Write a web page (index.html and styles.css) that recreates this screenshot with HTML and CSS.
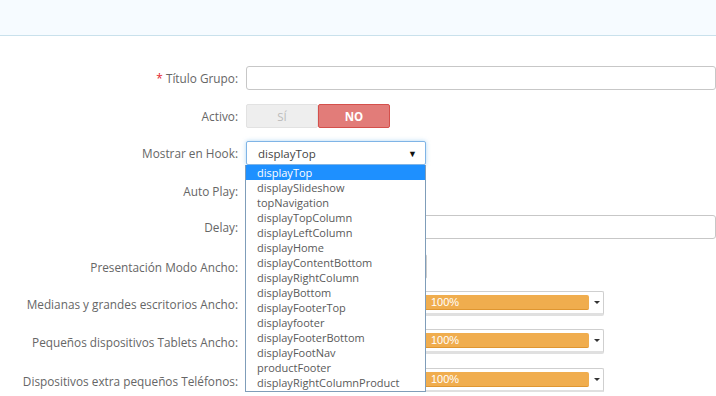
FILE: index.html
```html
<!DOCTYPE html>
<html lang="es">
<head>
    <meta charset="UTF-8">
    <meta name="viewport" content="width=device-width, initial-scale=1.0">
    <title>Grupo</title>
    <link rel="stylesheet" href="styles.css">
</head>
<body>

    <div class="toolbar"></div>

    <form class="form">
        <div class="row">
            <label class="label"><span class="required">*</span> Título Grupo:</label>
            <input type="text" class="text-input">
        </div>

        <div class="row">
            <label class="label">Activo:</label>
            <div class="switch">
                <span class="switch-yes">SÍ</span>
                <span class="switch-no">NO</span>
            </div>
        </div>

        <div class="row row-tight">
            <label class="label">Mostrar en Hook:</label>
            <div class="hook-select">
                <div class="hook-value">displayTop <span class="hook-arrow">&#9660;</span></div>
                <ul class="hook-list">
                    <li class="selected">displayTop</li>
                    <li>displaySlideshow</li>
                    <li>topNavigation</li>
                    <li>displayTopColumn</li>
                    <li>displayLeftColumn</li>
                    <li>displayHome</li>
                    <li>displayContentBottom</li>
                    <li>displayRightColumn</li>
                    <li>displayBottom</li>
                    <li>displayFooterTop</li>
                    <li>displayfooter</li>
                    <li>displayFooterBottom</li>
                    <li>displayFootNav</li>
                    <li>productFooter</li>
                    <li>displayRightColumnProduct</li>
                </ul>
            </div>
        </div>

        <div class="row">
            <label class="label">Auto Play:</label>
            <div class="switch"></div>
        </div>

        <div class="row row-tighter">
            <label class="label">Delay:</label>
            <input type="text" class="text-input">
        </div>

        <div class="row row-loose">
            <label class="label">Presentación Modo Ancho:</label>
            <div class="plain-select"></div>
        </div>

        <div class="row row-tight">
            <label class="label">Medianas y grandes escritorios Ancho:</label>
            <div class="width-select">
                <div class="width-bar">100%</div>
                <span class="width-caret"></span>
            </div>
        </div>

        <div class="row">
            <label class="label">Pequeños dispositivos Tablets Ancho:</label>
            <div class="width-select">
                <div class="width-bar">100%</div>
                <span class="width-caret"></span>
            </div>
        </div>

        <div class="row row-loose">
            <label class="label">Dispositivos extra pequeños Teléfonos:</label>
            <div class="width-select">
                <div class="width-bar">100%</div>
                <span class="width-caret"></span>
            </div>
        </div>
    </form>

</body>
</html>
```

FILE: styles.css
```css
body {
    font-family: "Open Sans", "Liberation Sans", sans-serif;
    font-size: 12px;
    color: #555;
    background-color: white;
    margin: 0;
}

.toolbar {
    height: 35px;
    background-color: #f6fbff;
    border-bottom: 1px solid #c9e1ec;
}

.form {
    display: flex;
    flex-direction: column;
    padding-top: 30px;
}

.row {
    display: grid;
    grid-template-columns: 238px 1fr;
    column-gap: 8px;
    align-items: center;
    height: 24px;
    margin-top: 14px;
}

.row:first-child {
    margin-top: 0;
}

.row-tight {
    margin-top: 13px;
}

.row-tighter {
    margin-top: 12px;
}

.row-loose {
    margin-top: 15px;
}

.label {
    text-align: right;
    font-size: 11.8px;
    color: #666;
}

.required {
    color: #e3262d;
}

.text-input {
    height: 24px;
    box-sizing: border-box;
    border: 1px solid #c7c7c7;
    border-radius: 3px;
    padding: 0 8px;
    margin: 0;
    width: 100%;
}

.switch {
    display: flex;
    width: 144px;
    height: 24px;
    box-sizing: border-box;
}

.switch span {
    flex: 1;
    display: flex;
    align-items: center;
    justify-content: center;
    font-size: 11.5px;
    border-radius: 2px;
}

.switch-yes {
    background-color: #eee;
    border: 1px solid #e2e2e2;
    color: #bbb;
}

.switch-no {
    background-color: #e27c79;
    border: 1px solid #d4504c;
    color: white;
    font-weight: bold;
}

.hook-select {
    position: relative;
    width: 180px;
    z-index: 2;
}

.hook-value {
    height: 24px;
    box-sizing: border-box;
    border: 1px solid #7fb4e6;
    border-radius: 2px;
    box-shadow: 0 0 4px rgba(102, 175, 233, 0.5);
    padding: 0 8px 0 11px;
    display: flex;
    align-items: center;
    justify-content: space-between;
    color: #444;
    font-size: 11.5px;
    background-color: white;
}

.hook-arrow {
    font-size: 9px;
    color: #111;
}

.hook-list {
    position: absolute;
    top: 24px;
    left: -1px;
    width: 181px;
    margin: 0;
    padding: 0 0 1px;
    list-style: none;
    background-color: white;
    border: 1px solid #7f9db9;
    border-top: none;
    box-sizing: border-box;
}

.hook-list li {
    height: 15px;
    line-height: 15px;
    padding-left: 11px;
    font-size: 11px;
    color: #5a5a5a;
}

.hook-list li.selected {
    background-color: #1e90ff;
    color: white;
}

.plain-select {
    width: 181px;
    height: 25px;
    box-sizing: border-box;
    border: 1px solid #ccc;
    border-radius: 2px;
}

.width-select {
    width: 358px;
    height: 25px;
    box-sizing: border-box;
    border: 1px solid #cfcfcf;
    border-bottom: 3px solid #e0e0e0;
    border-radius: 2px;
    display: flex;
    align-items: center;
    padding-left: 179px;
}

.width-bar {
    width: 163px;
    height: 15px;
    box-sizing: border-box;
    background-color: #f0ad4e;
    border-bottom: 1px solid #df9631;
    border-radius: 0 2px 2px 0;
    color: white;
    font-family: "Liberation Sans", sans-serif;
    font-size: 11px;
    line-height: 15px;
    padding-left: 5px;
}

.width-caret {
    margin-left: 5px;
    border-left: 3px solid transparent;
    border-right: 3px solid transparent;
    border-top: 3px solid #333;
}
```
